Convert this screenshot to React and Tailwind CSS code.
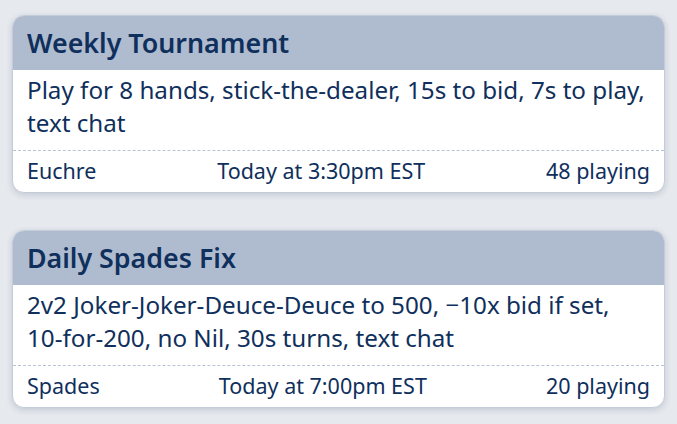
import React from 'react';

const games = [
  {
    title: 'Weekly Tournament',
    desc: ['Play for 8 hands, stick-the-dealer, 15s to bid, 7s to play, text chat'],
    game: 'Euchre',
    time: 'Today at 3:30pm EST',
    players: 48,
  },
  {
    title: 'Daily Spades Fix',
    desc: ['2v2 Joker-Joker-Deuce-Deuce to 500, \u221210x bid if set, ', '10-for-200', ', no Nil, 30s turns, text chat'],
    game: 'Spades',
    time: 'Today at 7:00pm EST',
    players: 20,
  },
];

const GameCard = ({ title, desc, game, time, players }) => (
  <div className="rounded-xl border border-[#c3ccd9] bg-white overflow-hidden shadow-[0_2px_6px_rgba(40,60,90,0.18)]">
    <div className="bg-[#afbccf] px-[14px] h-[54px] flex items-center">
      <h2 className="text-[26.8px] font-semibold leading-none">{title}</h2>
    </div>
    <p className="px-[14px] pt-[3px] pb-[11px] text-[24.2px] leading-[33px]">
      {desc.map((part, i) =>
        i === 1 ? <span key={i} className="whitespace-nowrap">{part}</span> : part
      )}
    </p>
    <div className="border-t border-dashed border-[#b8c3d3] px-[14px] h-[42px] flex items-center justify-between text-[21.5px]">
      <span>{game}</span>
      <span>{time}</span>
      <span>{players} playing</span>
    </div>
  </div>
);

export default function App() {
  return (
    <div
      className="min-h-screen bg-[#e6e9ee] px-[12px] pt-[15px] flex flex-col gap-[37px] text-[#0f2f5c]"
      style={{ fontFamily: '"Noto Sans", "Open Sans", sans-serif' }}
    >
      {games.map((g) => (
        <GameCard key={g.title} {...g} />
      ))}
    </div>
  );
}
